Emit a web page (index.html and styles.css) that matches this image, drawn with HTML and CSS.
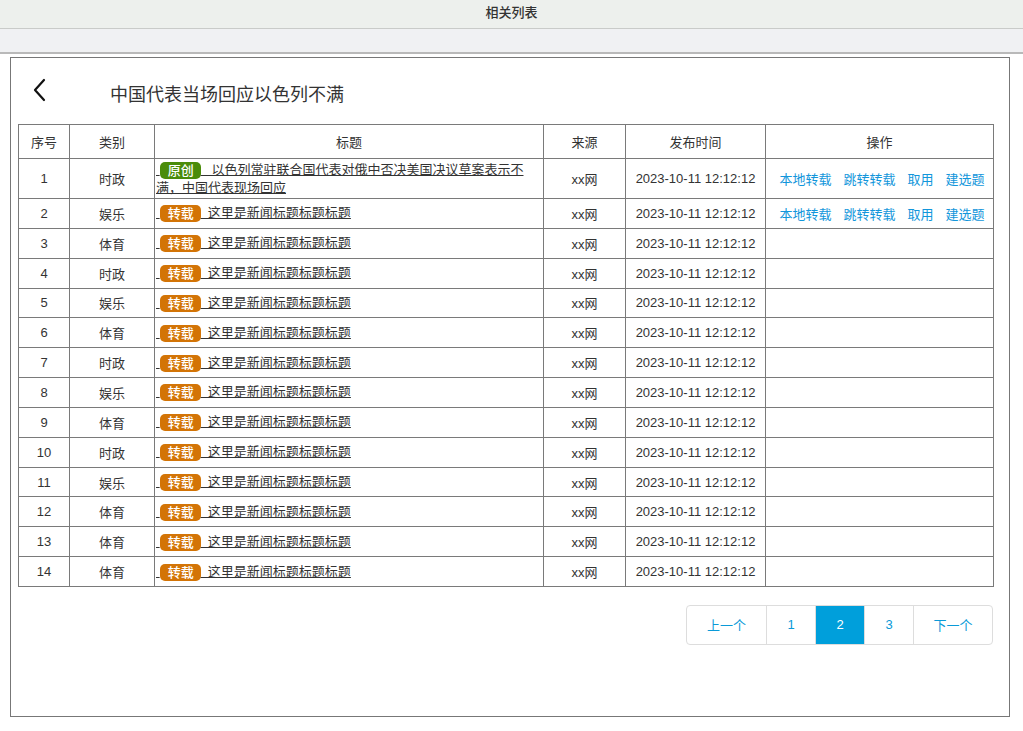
FILE: index.html
```html
<!DOCTYPE html>
<html lang="zh">
<head>
<meta charset="utf-8">
<title>相关列表</title>
<link rel="stylesheet" href="styles.css">
</head>
<body>
<div class="topbar">相关列表</div>
<div class="subbar"></div>
<div class="frame">
  <div class="header">
    <svg class="back" width="14" height="24" viewBox="0 0 14 24"><path d="M11 2 L2 12 L11 22" fill="none" stroke="#111" stroke-width="2.2" stroke-linecap="round" stroke-linejoin="round"/></svg>
    <h1 class="title">中国代表当场回应以色列不满</h1>
  </div>
  <table class="list">
    <colgroup>
      <col class="c1"><col class="c2"><col class="c3"><col class="c4"><col class="c5"><col class="c6">
    </colgroup>
    <thead>
      <tr><th>序号</th><th>类别</th><th>标题</th><th>来源</th><th>发布时间</th><th>操作</th></tr>
    </thead>
    <tbody>
      <tr class="tall"><td>1</td><td>时政</td><td class="tt"><a href="#">&nbsp;<span class="badge green">原创</span>&nbsp; &nbsp;以色列常驻联合国代表对俄中否决美国决议草案表示不满，中国代表现场回应</a></td><td>xx网</td><td>2023-10-11 12:12:12</td><td><div class="ops"><a href="#">本地转载</a><a href="#">跳转转载</a><a href="#">取用</a><a href="#">建选题</a></div></td></tr>
      <tr><td>2</td><td>娱乐</td><td class="tt"><a href="#">&nbsp;<span class="badge orange">转载</span>&nbsp; 这里是新闻标题标题标题</a></td><td>xx网</td><td>2023-10-11 12:12:12</td><td><div class="ops"><a href="#">本地转载</a><a href="#">跳转转载</a><a href="#">取用</a><a href="#">建选题</a></div></td></tr>
      <tr><td>3</td><td>体育</td><td class="tt"><a href="#">&nbsp;<span class="badge orange">转载</span>&nbsp; 这里是新闻标题标题标题</a></td><td>xx网</td><td>2023-10-11 12:12:12</td><td></td></tr>
      <tr><td>4</td><td>时政</td><td class="tt"><a href="#">&nbsp;<span class="badge orange">转载</span>&nbsp; 这里是新闻标题标题标题</a></td><td>xx网</td><td>2023-10-11 12:12:12</td><td></td></tr>
      <tr><td>5</td><td>娱乐</td><td class="tt"><a href="#">&nbsp;<span class="badge orange">转载</span>&nbsp; 这里是新闻标题标题标题</a></td><td>xx网</td><td>2023-10-11 12:12:12</td><td></td></tr>
      <tr><td>6</td><td>体育</td><td class="tt"><a href="#">&nbsp;<span class="badge orange">转载</span>&nbsp; 这里是新闻标题标题标题</a></td><td>xx网</td><td>2023-10-11 12:12:12</td><td></td></tr>
      <tr><td>7</td><td>时政</td><td class="tt"><a href="#">&nbsp;<span class="badge orange">转载</span>&nbsp; 这里是新闻标题标题标题</a></td><td>xx网</td><td>2023-10-11 12:12:12</td><td></td></tr>
      <tr><td>8</td><td>娱乐</td><td class="tt"><a href="#">&nbsp;<span class="badge orange">转载</span>&nbsp; 这里是新闻标题标题标题</a></td><td>xx网</td><td>2023-10-11 12:12:12</td><td></td></tr>
      <tr><td>9</td><td>体育</td><td class="tt"><a href="#">&nbsp;<span class="badge orange">转载</span>&nbsp; 这里是新闻标题标题标题</a></td><td>xx网</td><td>2023-10-11 12:12:12</td><td></td></tr>
      <tr><td>10</td><td>时政</td><td class="tt"><a href="#">&nbsp;<span class="badge orange">转载</span>&nbsp; 这里是新闻标题标题标题</a></td><td>xx网</td><td>2023-10-11 12:12:12</td><td></td></tr>
      <tr><td>11</td><td>娱乐</td><td class="tt"><a href="#">&nbsp;<span class="badge orange">转载</span>&nbsp; 这里是新闻标题标题标题</a></td><td>xx网</td><td>2023-10-11 12:12:12</td><td></td></tr>
      <tr><td>12</td><td>体育</td><td class="tt"><a href="#">&nbsp;<span class="badge orange">转载</span>&nbsp; 这里是新闻标题标题标题</a></td><td>xx网</td><td>2023-10-11 12:12:12</td><td></td></tr>
      <tr><td>13</td><td>体育</td><td class="tt"><a href="#">&nbsp;<span class="badge orange">转载</span>&nbsp; 这里是新闻标题标题标题</a></td><td>xx网</td><td>2023-10-11 12:12:12</td><td></td></tr>
      <tr><td>14</td><td>体育</td><td class="tt"><a href="#">&nbsp;<span class="badge orange">转载</span>&nbsp; 这里是新闻标题标题标题</a></td><td>xx网</td><td>2023-10-11 12:12:12</td><td></td></tr>
    </tbody>
  </table>
  <div class="pager-row">
    <div class="pager">
      <a href="#" class="pg wide">上一个</a><a href="#" class="pg">1</a><a href="#" class="pg active">2</a><a href="#" class="pg">3</a><a href="#" class="pg wide">下一个</a>
    </div>
  </div>
</div>
</body>
</html>
```

FILE: styles.css
```css
* { box-sizing: border-box; }
html, body {
  margin: 0;
  padding: 0;
  background: #fff;
  font-family: "Liberation Sans", "Noto Sans CJK SC", sans-serif;
  color: #333;
}
.topbar {
  height: 29px;
  background: #edf0ed;
  border-bottom: 1px solid #c9cbc9;
  text-align: center;
  font-size: 13px;
  font-weight: 500;
  line-height: 26px;
  color: #333;
}
.subbar {
  height: 25px;
  background: #f0f1f3;
  border-bottom: 2px solid #b9b9b9;
}
.frame {
  margin: 3px 13px 0 10px;
  width: 1000px;
  height: 660px;
  border: 1px solid #777;
  padding: 0 16px 0 7px;
}
.header {
  height: 66px;
  display: flex;
  align-items: center;
  padding-left: 15px;
}
.back { display: block; margin-top: -2px; }
.title {
  margin: 3px 0 0 63px;
  font-size: 18px;
  font-weight: normal;
  color: #333;
}
.list {
  width: 975px;
  border-collapse: collapse;
  table-layout: fixed;
  font-size: 13px;
}
.c1 { width: 51px; }
.c2 { width: 85px; }
.c3 { width: 389px; }
.c4 { width: 82px; }
.c5 { width: 140px; }
.c6 { width: 228px; }
.list th, .list td {
  border: 1px solid #7a7a7a;
  text-align: center;
  font-weight: normal;
  color: #333;
  padding: 0;
}
.list th { height: 34px; }
.list td { height: 29.85px; }
.list tr.tall td { height: 40px; }
.list td.tt {
  text-align: left;
  padding: 0 2px 0 1px;
  line-height: 17px;
}
.tt a {
  color: #333;
  text-decoration: underline;
}
.badge {
  display: inline-block;
  color: #fff;
  font-size: 13px;
  font-weight: 500;
  line-height: 17px;
  height: 17px;
  padding: 0 7px 0 8px;
  border-radius: 5px;
  vertical-align: -1px;
  text-decoration: none;
}
.green { background: #4a8c0a; }
.orange { background: #d37406; }
.ops {
  display: flex;
  justify-content: center;
  gap: 12px;
  padding-left: 5px;
}
.ops a {
  color: #1296db;
  text-decoration: none;
}
.pager-row {
  display: flex;
  justify-content: flex-end;
  margin-top: 18px;
}
.pager {
  display: flex;
  border: 1px solid #ddd;
  border-radius: 4px;
  overflow: hidden;
  height: 40px;
}
.pg {
  width: 49px;
  display: flex;
  align-items: center;
  justify-content: center;
  font-size: 13px;
  color: #0a9ad8;
  text-decoration: none;
  border-left: 1px solid #ddd;
}
.pg:first-child { border-left: none; }
.pg.wide { width: 79px; }
.pg.active {
  background: #009fdb;
  color: #fff;
}
```
